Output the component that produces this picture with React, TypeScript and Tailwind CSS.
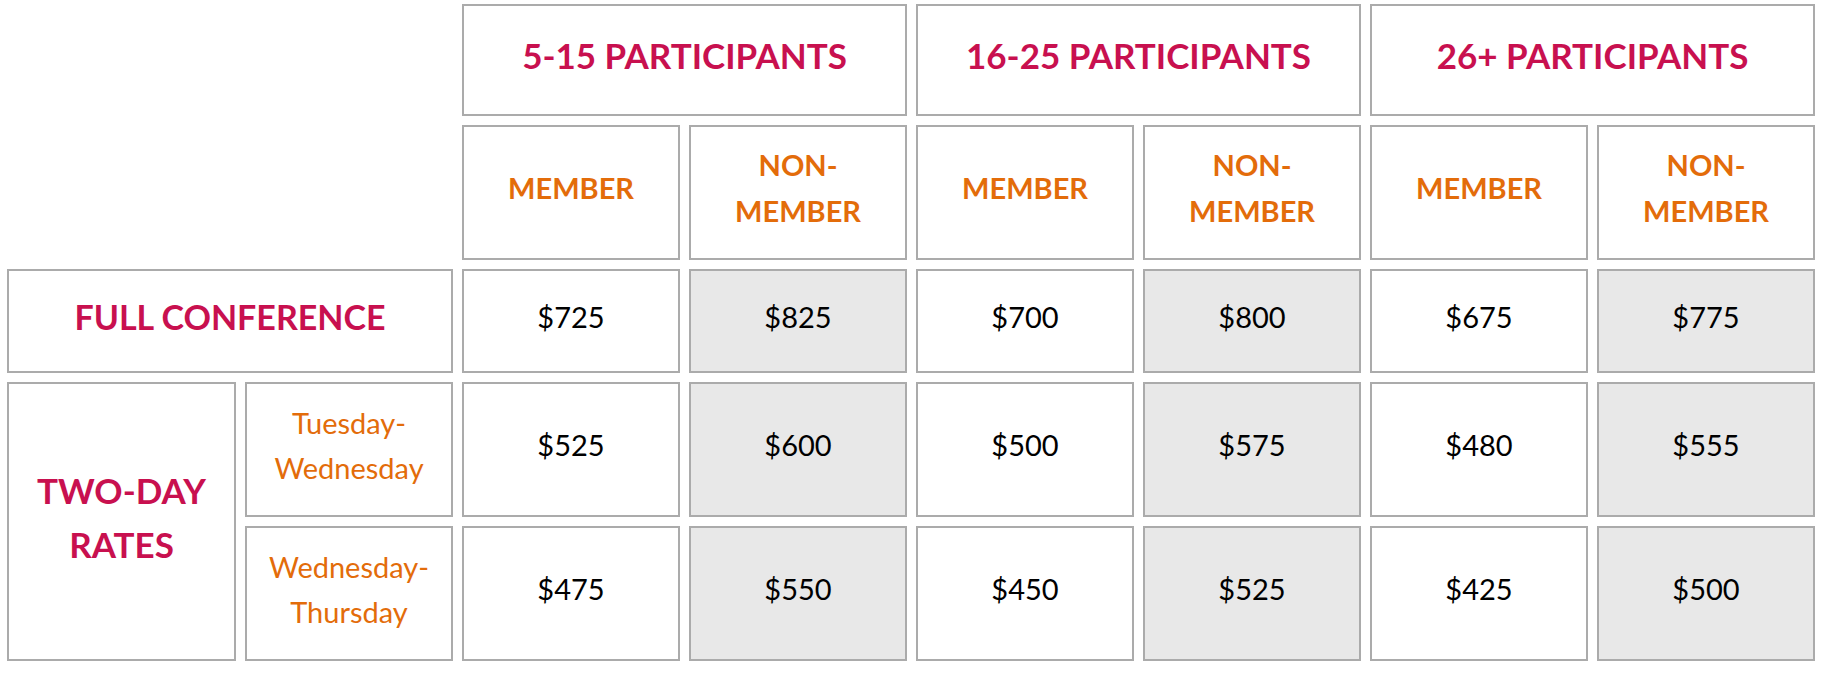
const groups = ["5-15 PARTICIPANTS", "16-25 PARTICIPANTS", "26+ PARTICIPANTS"];

const fullConference = ["$725", "$825", "$700", "$800", "$675", "$775"];

const twoDay = [
  { label: ["Tuesday-", "Wednesday"], prices: ["$525", "$600", "$500", "$575", "$480", "$555"] },
  { label: ["Wednesday-", "Thursday"], prices: ["$475", "$550", "$450", "$525", "$425", "$500"] },
];

const cell = "flex items-center justify-center border-2 border-[#ababab] pb-[9px] text-center";

const PriceCell = ({ value, shaded }: { value: string; shaded: boolean }) => (
  <div className={`${cell} ${shaded ? "bg-[#e8e8e8]" : "bg-white"} text-[29px] text-black`}>
    {value}
  </div>
);

const App = () => {
  return (
    <div
      className="grid h-[673px] w-[1825px] bg-white pl-[7px] pt-[4px] [font-family:Lato,'Open_Sans',sans-serif]"
      style={{
        gridTemplateColumns: "229px 208px repeat(6, 218px)",
        gridTemplateRows: "112px 135px 104px 135px 135px",
        gap: "9px",
      }}
    >
      {/* top-left corner stays empty */}
      <div className="col-span-2 row-span-2" />

      {groups.map((g) => (
        <div
          key={g}
          className={`${cell} col-span-2 bg-white text-[35px] font-bold text-[#c8104f]`}
        >
          {g}
        </div>
      ))}

      {groups.map((g) => [
        <div key={g + "m"} className={`${cell} bg-white text-[29px] font-bold leading-[46px] text-[#e36c0a]`}>
          MEMBER
        </div>,
        <div key={g + "n"} className={`${cell} bg-white text-[29px] font-bold leading-[46px] text-[#e36c0a]`}>
          NON-
          <br />
          MEMBER
        </div>,
      ])}

      <div className={`${cell} col-span-2 bg-white text-[34px] font-bold text-[#c8104f]`}>
        FULL CONFERENCE
      </div>
      {fullConference.map((p, i) => (
        <PriceCell key={"f" + i} value={p} shaded={i % 2 === 1} />
      ))}

      <div
        className={`${cell} row-span-2 bg-white text-[35px] font-bold leading-[54px] text-[#c8104f]`}
      >
        TWO-DAY
        <br />
        RATES
      </div>
      {twoDay.map((row, r) => [
        <div
          key={"l" + r}
          className={`${cell} ${r === 1 ? "col-start-2" : ""} bg-white text-[29px] leading-[45px] text-[#e36c0a]`}
        >
          {row.label[0]}
          <br />
          {row.label[1]}
        </div>,
        ...row.prices.map((p, i) => <PriceCell key={r + "-" + i} value={p} shaded={i % 2 === 1} />),
      ])}
    </div>
  );
};

export default App;
